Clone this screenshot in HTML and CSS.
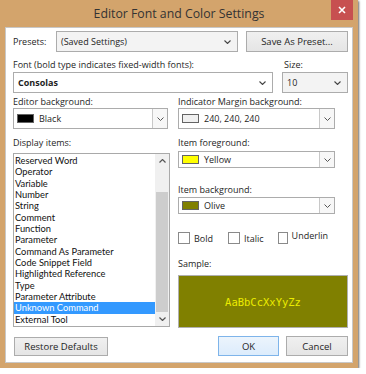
FILE: index.html
```html
<!DOCTYPE html>
<html lang="en">
<head>
  <meta charset="UTF-8" />
  <title>Editor Font and Color Settings</title>
  <link rel="stylesheet" href="styles.css">
</head>
<body>

<div class="window">
  <div class="titlebar">Editor Font and Color Settings</div>
  <div class="close-btn">
    <svg width="8" height="8" viewBox="0 0 8 8"><path d="M1 1 L7 7 M7 1 L1 7" stroke="#fff" stroke-width="1.6"/></svg>
  </div>

  <div class="client">
    <div class="row presets-row">
      <span class="presets-label">Presets:</span>
      <div class="combo combo-grey presets-combo">
        <span class="combo-text">(Saved Settings)</span>
        <svg class="chev" width="7" height="4" viewBox="0 0 7 4"><path d="M0.5 0.5 L3.5 3.5 L6.5 0.5" fill="none" stroke="#444" stroke-width="1.1"/></svg>
      </div>
      <button class="btn save-btn">Save As Preset...</button>
    </div>

    <div class="row label-row">
      <span class="font-label">Font (bold type indicates fixed-width fonts):</span>
      <span class="size-label">Size:</span>
    </div>
    <div class="row">
      <div class="combo font-combo">
        <span class="combo-text bold">Consolas</span>
        <svg class="chev" width="7" height="4" viewBox="0 0 7 4"><path d="M0.5 0.5 L3.5 3.5 L6.5 0.5" fill="none" stroke="#444" stroke-width="1.1"/></svg>
      </div>
      <div class="combo combo-grey size-combo">
        <span class="combo-text">10</span>
        <svg class="chev" width="7" height="4" viewBox="0 0 7 4"><path d="M0.5 0.5 L3.5 3.5 L6.5 0.5" fill="none" stroke="#444" stroke-width="1.1"/></svg>
      </div>
    </div>

    <div class="row label-row tight">
      <span class="left-label">Editor background:</span>
      <span>Indicator Margin background:</span>
    </div>
    <div class="row">
      <div class="color-combo left-combo">
        <span class="swatch" style="background:#000"></span>
        <span class="combo-text">Black</span>
        <span class="drop">
          <svg width="7" height="4" viewBox="0 0 7 4"><path d="M0.5 0.5 L3.5 3.5 L6.5 0.5" fill="none" stroke="#555" stroke-width="1"/></svg>
        </span>
      </div>
      <div class="color-combo right-combo">
        <span class="swatch" style="background:#f0f0f0"></span>
        <span class="combo-text">240, 240, 240</span>
        <span class="drop">
          <svg width="7" height="4" viewBox="0 0 7 4"><path d="M0.5 0.5 L3.5 3.5 L6.5 0.5" fill="none" stroke="#555" stroke-width="1"/></svg>
        </span>
      </div>
    </div>

    <div class="columns">
      <div class="col-left">
        <span class="lbl">Display items:</span>
        <div class="listbox">
          <ul class="items">
            <li>Reserved Word</li>
            <li>Operator</li>
            <li>Variable</li>
            <li>Number</li>
            <li>String</li>
            <li>Comment</li>
            <li>Function</li>
            <li>Parameter</li>
            <li>Command As Parameter</li>
            <li>Code Snippet Field</li>
            <li>Highlighted Reference</li>
            <li>Type</li>
            <li>Parameter Attribute</li>
            <li class="selected">Unknown Command</li>
            <li>External Tool</li>
          </ul>
          <div class="scrollbar">
            <span class="sb-arrow">
              <svg width="7" height="4" viewBox="0 0 7 4"><path d="M0.5 3.5 L3.5 0.5 L6.5 3.5" fill="none" stroke="#555" stroke-width="1.2"/></svg>
            </span>
            <span class="sb-gap"></span>
            <span class="sb-thumb"></span>
            <span class="sb-arrow">
              <svg width="7" height="4" viewBox="0 0 7 4"><path d="M0.5 0.5 L3.5 3.5 L6.5 0.5" fill="none" stroke="#555" stroke-width="1.2"/></svg>
            </span>
          </div>
        </div>
        <button class="btn restore-btn">Restore Defaults</button>
      </div>

      <div class="col-right">
        <span class="lbl">Item foreground:</span>
        <div class="color-combo item-combo">
          <span class="swatch" style="background:#ffff00"></span>
          <span class="combo-text">Yellow</span>
          <span class="drop">
            <svg width="7" height="4" viewBox="0 0 7 4"><path d="M0.5 0.5 L3.5 3.5 L6.5 0.5" fill="none" stroke="#555" stroke-width="1"/></svg>
          </span>
        </div>

        <span class="lbl lbl-gap">Item background:</span>
        <div class="color-combo item-combo">
          <span class="swatch" style="background:#808000"></span>
          <span class="combo-text">Olive</span>
          <span class="drop">
            <svg width="7" height="4" viewBox="0 0 7 4"><path d="M0.5 0.5 L3.5 3.5 L6.5 0.5" fill="none" stroke="#555" stroke-width="1"/></svg>
          </span>
        </div>

        <div class="checks">
          <label class="check"><span class="box"></span>Bold</label>
          <label class="check"><span class="box"></span>Italic</label>
          <label class="check raised"><span class="box"></span>Underlin</label>
        </div>

        <span class="lbl">Sample:</span>
        <div class="sample">AaBbCcXxYyZz</div>

        <div class="dialog-btns">
          <button class="btn ok-btn">OK</button>
          <button class="btn cancel-btn">Cancel</button>
        </div>
      </div>
    </div>
  </div>
</div>

</body>
</html>
```

FILE: styles.css
```css
body {
  margin: 0;
  background: #fff;
  font-family: "Open Sans", "Noto Sans", sans-serif;
  font-size: 9px;
  color: #1e1e1e;
}
.window {
  position: relative;
  width: 358px;
  height: 368px;
  box-sizing: border-box;
  padding: 0 5px 5px;
  background: #d3a46c;
  box-shadow: 1px 1px 2px rgba(0,0,0,0.6);
  display: flex;
  flex-direction: column;
}
.titlebar {
  height: 27px;
  display: flex;
  align-items: center;
  justify-content: center;
  font-size: 12.3px;
  color: #333;
}
.close-btn {
  position: absolute;
  top: 0;
  right: 5px;
  width: 22px;
  height: 20px;
  background: #c75050;
  display: flex;
  align-items: center;
  justify-content: center;
}
.client {
  flex: 1;
  background: #fff;
  border: 1px solid #c8c8c8;
  padding: 3px 4px 0 7px;
  display: flex;
  flex-direction: column;
}
.row {
  display: flex;
  align-items: center;
}
.presets-label { width: 43px; }
.combo {
  height: 21px;
  box-sizing: border-box;
  border: 1px solid #acacac;
  background: #fff;
  display: flex;
  align-items: center;
  padding: 0 6px 0 4px;
}
.combo-grey { background: #f3f3f3; }
.combo-text { flex: 1; }
.bold { font-weight: bold; }
.presets-combo { width: 182px; }
.save-btn { width: 102px; height: 21px; margin-left: 8px; }
.btn {
  box-sizing: border-box;
  border: 1px solid #acacac;
  background: linear-gradient(#f0f0f0, #e5e5e5);
  font-family: inherit;
  font-size: 9.5px;
  color: #1e1e1e;
  padding: 0;
}
.label-row {
  height: 12px;
  margin-top: 6px;
  margin-bottom: 2px;
}
.label-row.tight {
  margin-top: 2px;
  margin-bottom: 1px;
}
.font-label { width: 271px; }
.font-combo { width: 260px; }
.size-combo { width: 66px; margin-left: 9px; }
.left-label { width: 165px; }
.color-combo {
  height: 21px;
  box-sizing: border-box;
  border: 1px solid #acacac;
  background: #fff;
  display: flex;
  align-items: center;
  padding-left: 3px;
}
.swatch {
  width: 15px;
  height: 7px;
  border: 1px solid #646464;
  margin-right: 5px;
}
.drop {
  align-self: stretch;
  width: 14px;
  border-left: 1px solid #c8c8c8;
  background: #f7f7f7;
  display: flex;
  align-items: center;
  justify-content: center;
}
.left-combo { width: 155px; }
.right-combo { width: 157px; margin-left: 10px; }
.columns {
  display: flex;
  margin-top: 8px;
}
.col-left {
  width: 157px;
  display: flex;
  flex-direction: column;
}
.col-right {
  flex: 1;
  margin-left: 8px;
  display: flex;
  flex-direction: column;
}
.lbl {
  height: 12px;
  line-height: 12px;
}
.listbox {
  margin-top: 4px;
  height: 174px;
  box-sizing: border-box;
  border: 1px solid #a9a9a9;
  display: flex;
}
.items {
  list-style: none;
  margin: 0;
  padding: 1px 0 0 0;
  flex: 1;
  font-family: Lato, "Open Sans", sans-serif;
  font-size: 9.3px;
}
.items li {
  height: 11.33px;
  line-height: 11.33px;
  padding-left: 1px;
  white-space: nowrap;
  color: #111;
}
.items li.selected {
  background: #3399ff;
  color: #fff;
}
.scrollbar {
  width: 14px;
  background: #f0f0f0;
  display: flex;
  flex-direction: column;
}
.sb-arrow {
  height: 14px;
  display: flex;
  align-items: center;
  justify-content: center;
}
.sb-gap { height: 24px; }
.sb-thumb {
  flex: 1;
  background: #cdcdcd;
  margin: 0 1px;
}
.restore-btn {
  width: 94px;
  height: 19px;
  margin-top: 10px;
  margin-left: 1px;
}
.item-combo {
  width: 157px;
  height: 17px;
  margin-top: 2px;
}
.lbl-gap { margin-top: 16px; }
.lbl-gap + .item-combo { margin-top: 1px; }
.checks {
  display: flex;
  margin-top: 18px;
  height: 12px;
  align-items: center;
}
.check {
  display: flex;
  align-items: center;
  width: 50px;
}
.check .box {
  width: 10px;
  height: 10px;
  border: 1px solid #8a8a8a;
  background: #fff;
  margin-right: 4px;
}
.raised { align-items: flex-start; line-height: 8px; }
.checks + .lbl { margin-top: 14px; }
.sample {
  margin-top: 5px;
  height: 53px;
  box-sizing: border-box;
  border: 1px solid #b0b0b0;
  background: #808000;
  color: #ecec00;
  font-family: "DejaVu Sans Mono", monospace;
  font-size: 10.5px;
  display: flex;
  align-items: center;
  justify-content: center;
}
.dialog-btns {
  display: flex;
  justify-content: flex-end;
  margin-top: 8px;
}
.ok-btn {
  width: 61px;
  height: 20px;
  border-color: #7eb4ea;
  background: linear-gradient(#ecf4fc, #dcecfc);
}
.cancel-btn {
  width: 62px;
  height: 20px;
  margin-left: 7px;
}
```
